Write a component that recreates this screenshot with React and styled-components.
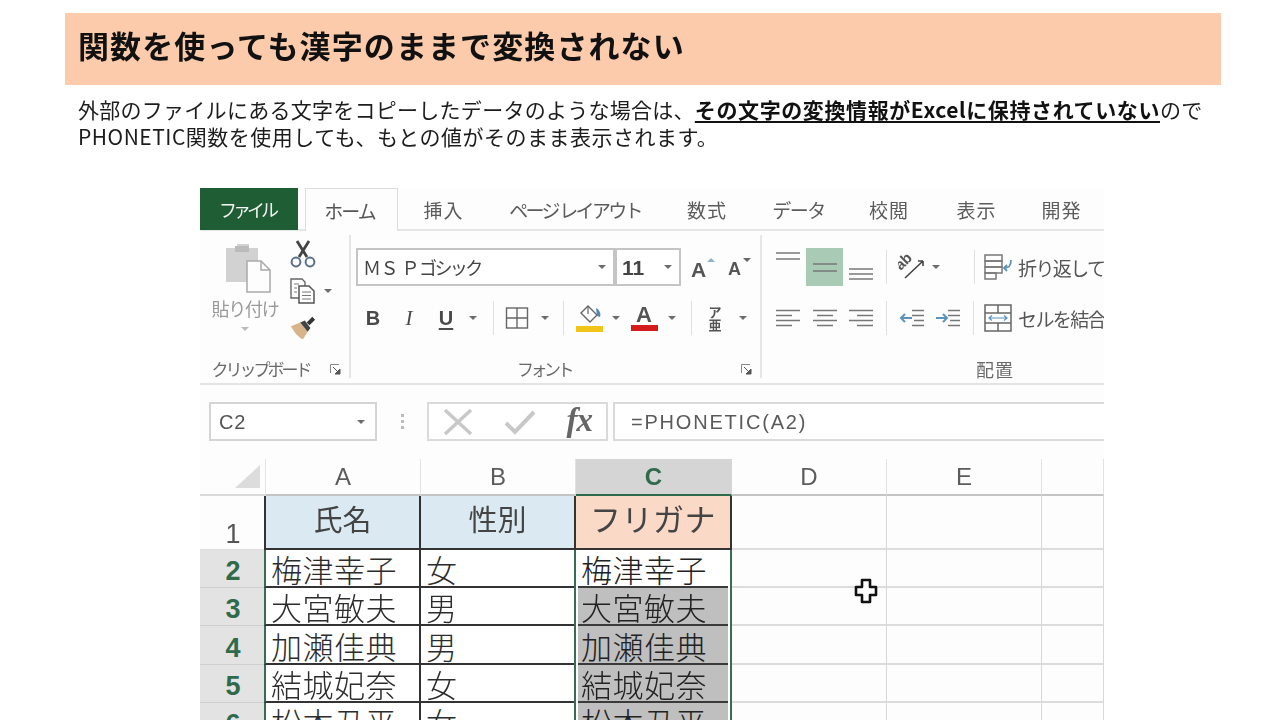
import React from "react";
import styled, { createGlobalStyle } from "styled-components";

const JP = `"Noto Sans CJK JP", "Noto Sans", sans-serif`;
const LAT = `"Liberation Sans", "Noto Sans CJK JP", sans-serif`;

const Global = createGlobalStyle`
  html, body { margin: 0; padding: 0; background: #fff; }
  body { width: 1280px; height: 720px; overflow: hidden; font-family: ${JP}; }
`;

const Page = styled.div`
  width: 1280px; height: 720px; overflow: hidden; box-sizing: border-box;
  padding: 13px 59px 0 65px; display: flex; flex-direction: column;
  filter: blur(0.35px);
`;
const Banner = styled.div`
  height: 72px; background: #fbcbab; display: flex; align-items: center; padding: 0 0 9px 13px; box-sizing: border-box;
`;
const Title = styled.h1`
  margin: 0; font: 700 31px/1 ${JP}; color: #111; letter-spacing: 1.1px; white-space: nowrap;
`;
const Lead = styled.div`
  margin: 11px 0 0 13px; font: 400 21px/27px "Noto Sans CJK JP", sans-serif; color: #1c1c1c; white-space: nowrap;
`;
const LeadLine = styled.div`
  letter-spacing: ${p => p.$ls}px;
`;
const Strong = styled.b`
  font-weight: 700; text-decoration: underline; text-underline-offset: 3px; color: #111; letter-spacing: 0.6px;
`;
const Excel = styled.div`
  margin: 38px 0 0 135px; width: 904px; flex: none; height: 532px; overflow: hidden; background: #fdfdfd; position: relative; color: #555;
`;

/* tabs */
const TabBar = styled.div`
  display: flex; height: 41px; border-bottom: 2px solid #e6e6e6; box-sizing: content-box;
`;
const FileTab = styled.div`
  width: 98px; height: 42px; background: #1f5d34; color: #f4f4f4; display: flex; align-items: center; justify-content: center;
  margin-right: 7px; font: 400 18px/1 ${JP}; letter-spacing: -4px; padding-right: 4px; box-sizing: border-box;
`;
const Tab = styled.div`
  width: ${p => p.$w}px; flex: none; display: flex; align-items: center; justify-content: center; white-space: nowrap;
  font: 400 19px/1 ${JP}; letter-spacing: ${p => p.$ls ?? 1}px; color: #5c5c5c; height: 42px; box-sizing: border-box;
  ${p => p.$active && `
    background: #fdfdfd; border: 1px solid #dcdcdc; border-bottom: 0; height: 43px; color: #555; padding-right: 4px;
  `}
`;

/* ribbon */
const Ribbon = styled.div`
  display: flex; height: 154px; box-sizing: border-box; padding-top: 4px; border-bottom: 2px solid #e4e4e4;
`;
const Group = styled.section`
  width: ${p => p.$w}px; flex: none; height: 143px; box-sizing: border-box; display: flex; flex-direction: column;
  padding: ${p => p.$pt ?? 13}px 0 0 ${p => p.$pl ?? 0}px; margin-right: ${p => p.$mr ?? 0}px;
  ${p => p.$sep && `border-right: 2px solid #e6e6e6;`}
`;
const ToolRow = styled.div`
  display: flex; align-items: center; height: ${p => p.$h ?? 38}px; flex: none; margin-bottom: ${p => p.$mb ?? 0}px;
`;
const Slot = styled.div`
  width: ${p => p.$w}px; flex: none; height: 100%; display: flex; align-items: center; justify-content: center; position: relative;
  ${p => p.$on && `background: #a9cbb5;`}
`;
const Sep = styled.i`
  display: block; width: 1px; height: 34px; background: #e0e0e0;
`;
const Caret = styled.i`
  display: block; width: 0; height: 0; border-left: 4px solid transparent; border-right: 4px solid transparent; border-top: 4px solid ${p => p.$c ?? "#6c6c6c"};
`;
const LabelRow = styled.div`
  margin-top: auto; display: flex; height: 22px; align-items: center; margin-bottom: -2px;
`;
const GroupLabel = styled.div`
  flex: 1; text-align: center; font: 400 ${p => p.$s ?? 17}px/22px ${JP}; color: #6a6a6a; letter-spacing: ${p => p.$ls ?? -3}px; white-space: nowrap;
`;
const Launcher = styled.div`
  width: ${p => p.$w}px; flex: none; display: flex; justify-content: center;
`;
const ClipBody = styled.div`
  display: flex; flex: none;
`;
const PasteCol = styled.div`
  width: 90px; flex: none; display: flex; flex-direction: column; align-items: center; padding-top: 8px; box-sizing: border-box;
`;
const PasteIcon = styled.div`
  height: 50px; margin-left: 6px;
`;
const PasteLabel = styled.div`
  font: 400 18px/22px ${JP}; letter-spacing: -1.2px; color: #9a9a9a; margin-top: 4px; margin-bottom: 8px; white-space: nowrap;
`;
const ClipTools = styled.div`
  display: flex; flex-direction: column;
`;
const ClipTool = styled.div`
  height: 37px; display: flex; align-items: center; gap: 8px;
`;
const ClipIcon = styled.div`
  width: 26px; display: flex; justify-content: center;
`;
const FontCombo = styled.div`
  width: ${p => p.$w}px; flex: none; height: 38px; box-sizing: border-box; border: 2px solid #c4c4c4; background: #fff; display: flex; align-items: center;
  justify-content: space-between; padding: 0 7px 0 5px; margin-left: ${p => p.$ml ?? 0}px;
  color: #444; white-space: nowrap;
`;
const FontName = styled.span`
  font: 400 18px/1 ${JP}; letter-spacing: -0.5px;
`;
const Kana = styled.span`
  letter-spacing: -2.6px;
`;
const SizeText = styled.span`
  font: 700 21px/1 ${LAT}; color: #444;
`;
const GrowA = styled.span`
  font: 700 ${p => p.$s}px/1 ${LAT}; color: #555; margin-right: 5px; margin-top: 4px;
`;
const Tip = styled.i`
  position: absolute; top: 10px; right: ${p => p.$r}px; width: 0; height: 0; border-left: 4px solid transparent; border-right: 4px solid transparent;
  ${p => p.$up ? `border-bottom: 4px solid #8fb5cf;` : `border-top: 4px solid #666;`}
`;
const Fmt = styled.span`
  font: ${p => p.$i ? "italic 400 21px/1 \"Liberation Serif\", serif" : "700 20px/1 \"Liberation Sans\", sans-serif"};
  color: #4a4a4a; ${p => p.$u && `text-decoration: underline; text-underline-offset: 3px;`}
`;
const ColorStack = styled.div`
  display: flex; flex-direction: column; align-items: center; width: 28px;
`;
const ColorA = styled.span`
  font: 700 22px/20px "Liberation Sans", sans-serif; color: #555;
`;
const ColorBar = styled.i`
  display: block; width: 27px; height: 6px; background: ${p => p.$c};
`;
const Phonetic = styled.div`
  display: flex; flex-direction: column; align-items: center; font: 700 13px/13px ${JP}; color: #555;
`;
const CmdText = styled.span`
  font: 400 19px/1 ${JP}; letter-spacing: -1.6px; color: #555; white-space: nowrap; margin-left: 3px;
`;

/* formula bar */
const FormulaBar = styled.div`
  display: flex; height: 39px; margin-top: 17px; padding-left: 9px;
`;
const NameBox = styled.div`
  width: 168px; flex: none; box-sizing: border-box; border: 2px solid #d4d4d4; background: #fff; display: flex; align-items: center; justify-content: space-between;
  padding: 0 10px 0 8px; font: 400 20px/1 ${LAT}; color: #555; letter-spacing: 0.8px;
`;
const Dots = styled.div`
  width: 50px; flex: none; display: flex; flex-direction: column; align-items: center; justify-content: center; gap: 3px;
`;
const Dot = styled.i`
  display: block; width: 3px; height: 3px; background: #bbb;
`;
const FxBox = styled.div`
  width: 181px; flex: none; box-sizing: border-box; border: 2px solid #dadada; background: #fff; display: flex; align-items: center; justify-content: space-between;
  padding: 0 14px 0 14px; margin-right: 5px;
`;
const Fx = styled.span`
  font: italic 700 33px/1 "Liberation Serif", serif; color: #666; margin-top: -2px; letter-spacing: -1px;
`;
const FormulaInput = styled.div`
  flex: 1; box-sizing: border-box; border: 2px solid #dadada; border-right: 0; background: #fff; display: flex; align-items: center;
  padding-left: 16px; font: 400 20px/1 ${LAT}; color: #5a5a5a; letter-spacing: 1.8px; white-space: nowrap;
`;

/* sheet */
const Sheet = styled.div`
  display: grid; margin-top: 18px;
  grid-template-columns: 66px 155px 155px 156px 155px 155px 62px;
  grid-template-rows: 37px 54px 38px 38px 39px 38px 38px;
  position: relative;
`;
const Corner = styled.div`
  display: flex; align-items: flex-end; justify-content: flex-end; padding: 0 5px 6px 0; border-bottom: 2px solid #dadada; border-right: 1px solid #e4e4e4;
`;
const ColHead = styled.div`
  display: flex; align-items: center; justify-content: center; box-sizing: border-box; font: ${p => p.$sel ? 700 : 400} 24px/1 ${LAT};
  color: ${p => p.$sel ? "#2f6a4c" : "#5c5c5c"}; background: ${p => p.$sel ? "#d5d5d5" : "transparent"};
  border-bottom: 2px solid ${p => p.$sel ? "#2f6a4c" : "#c4c4c4"}; border-right: 1px solid ${p => p.$sel ? "#d5d5d5" : "#e2e2e2"};
`;
const RowHead = styled.div`
  display: flex; justify-content: center; box-sizing: border-box; align-items: ${p => p.$first ? "flex-end" : "center"};
  padding: ${p => p.$first ? "0 0 1px 0" : "6px 0 0 0"};
  font: ${p => p.$first ? 400 : 700} 27px/1 ${LAT}; color: ${p => p.$first ? "#555" : "#2f6a4c"}; background: ${p => p.$first ? "transparent" : "#e3e3e3"};
  border-bottom: 1px solid ${p => p.$first ? "#ddd" : "#cfcfcf"};
`;
const HeadCell = styled.div`
  box-sizing: border-box; display: flex; align-items: center; justify-content: center; overflow: hidden; white-space: nowrap; color: #444;
  font: 400 ${p => p.$big ? 31 : 29}px/34px ${JP}; padding-bottom: 8px; background: ${p => p.$bg};
  letter-spacing: ${p => p.$big ? 0.5 : 0}px;
  border-right: 2px solid #333; border-bottom: 2px solid #333;
  ${p => p.$left && `border-left: 2px solid #333; margin-left: -2px;`}
`;
const Cell = styled.div`
  box-sizing: border-box; display: flex; align-items: flex-end; overflow: hidden; white-space: nowrap; color: #2c2c2c;
  font: 300 31px/34px ${JP}; letter-spacing: 0.5px; padding-left: 5px; background: #fff;
  border-right: 2px solid #333; border-bottom: 2px solid #333;
  ${p => p.$left && `border-left: 2px solid #3b6b55; margin-left: -2px;`}
`;
const SelCell = styled.div`
  box-sizing: border-box; display: flex; overflow: hidden; white-space: nowrap; background: #fff; padding: 0 2px;
  margin-left: -2px; border-left: 2px solid #3b6b55; border-right: 2px solid #3b6b55;
`;
const SelFill = styled.div`
  flex: 1; box-sizing: border-box; display: flex; align-items: flex-end; padding-left: 3px; color: #222;
  font: 300 31px/34px ${JP}; letter-spacing: 0.5px; overflow: hidden;
  background: ${p => p.$shade ? "#bfbfbf" : "#fff"}; border-bottom: 2px solid #3a3a3a;
`;
const Empty = styled.div`
  box-sizing: border-box; border-right: 1px solid #d8d8d8; border-bottom: 2px solid #dcdcdc;
`;
const Pointer = styled.svg`
  position: absolute; left: 654px; top: 119px; overflow: visible;
`;
const OrientText = styled.text`
  font: 700 15px "Liberation Sans", sans-serif; fill: #555;
`;

const Paste = () => (
  <svg width="48" height="50" viewBox="0 0 48 50">
    <path d="M2 5h11V1h12v4h9v34H2z" fill="#d2d2d2" />
    <rect x="11" y="3" width="14" height="6" fill="#bbb" />
    <path d="M23 18h14l9 9v22H23z" fill="#fdfdfd" stroke="#a9a9a9" strokeWidth="1.5" />
    <path d="M37 18v9h9" fill="none" stroke="#a9a9a9" strokeWidth="1.5" />
  </svg>
);
const Scissors = () => (
  <svg width="26" height="28" viewBox="0 0 26 28">
    <path d="M7 1l10 16M19 1L9 17" stroke="#444" strokeWidth="2.800" fill="none" />
    <circle cx="6" cy="22" r="4.400" fill="none" stroke="#56708a" strokeWidth="2" />
    <circle cx="20" cy="22" r="4.400" fill="none" stroke="#56708a" strokeWidth="2" />
  </svg>
);
const Copy = () => (
  <svg width="26" height="26" viewBox="0 0 26 26">
    <path d="M1 1h11l3 3v16H1z" fill="#fff" stroke="#666" strokeWidth="1.400" />
    <path d="M9 8h10l5 5v12H9z" fill="#fff" stroke="#555" strokeWidth="1.500" />
    <path d="M4 6h5M4 10h3M4 14h3M12 14h9M12 17.500h9M12 21h9" stroke="#777" strokeWidth="1.200" />
  </svg>
);
const Brush = () => (
  <svg width="28" height="26" viewBox="0 0 28 26">
    <path d="M1 11l10-4 8 10-5 8c-5-2-10-8-13-14z" fill="#d8b48a" />
    <path d="M11 7l5-2 6 8-3 4z" fill="#444" />
    <path d="M18 7l6-6 3 3-6 6z" fill="#333" />
  </svg>
);
const Launch = () => (
  <svg width="11" height="11" viewBox="0 0 11 11">
    <path d="M.5 9V.5H9" fill="none" stroke="#888" />
    <path d="M3 3l7 7M10 5v5H5z" stroke="#555" fill="#555" strokeWidth="1" />
  </svg>
);
const Borders = () => (
  <svg width="24" height="24" viewBox="0 0 24 24" fill="none" stroke="#666" strokeWidth="1.400">
    <rect x="1.500" y="2" width="21" height="20" /><path d="M12 2v20M1.500 12h21" />
  </svg>
);
const Bucket = () => (
  <svg width="28" height="22" viewBox="0 0 28 22">
    <path d="M13 2l9 9-7 7-9-9z" fill="#fff" stroke="#666" strokeWidth="1.400" />
    <path d="M13 2v8" stroke="#666" strokeWidth="1.200" />
    <path d="M21 4c4 2 5 6 4 9l-3-1z" fill="#4f87b8" />
  </svg>
);
const lineSet = (ys, w = 24) => ys.map(y => <path key={y} d={`M0 ${y}h${w}`} stroke="#777" strokeWidth="1.500" />);
const VAlign = ({ ys, dy = 0 }) => (
  <svg width="24" height="26" viewBox="0 0 24 26" style={{ marginTop: dy }}>{lineSet(ys)}</svg>
);
const HAlign = ({ mode }) => {
  const rows = [24, 16, 24, 16];
  return (
    <svg width="24" height="20" viewBox="0 0 24 20">
      {rows.map((w, i) => {
        const x = mode === "l" ? 0 : mode === "c" ? (24 - w) / 2 : 24 - w;
        return <path key={i} d={`M${x} ${2.500 + i * 5}h${w}`} stroke="#777" strokeWidth="1.500" />;
      })}
    </svg>
  );
};
const Orient = () => (
  <svg width="28" height="26" viewBox="0 0 28 26">
    <OrientText transform="rotate(-45 2 15)" x="1" y="17">ab</OrientText>
    <path d="M7 24L25 7M25 7h-5M25 7v5" fill="none" stroke="#444" strokeWidth="1.600" />
  </svg>
);
const Indent = ({ flip }) => (
  <svg width="26" height="20" viewBox="0 0 26 20">
    <path d={flip ? "M1 10h11M8 6l4 4-4 4" : "M2 10h11M6 6l-4 4 4 4"} stroke="#5b93bd" strokeWidth="2" fill="none" />
    <path d="M13 2.500h12M13 7.500h12M15 12.500h10M13 17.500h12" stroke="#777" strokeWidth="1.500" />
  </svg>
);
const Wrap = () => (
  <svg width="28" height="26" viewBox="0 0 28 26" fill="none" stroke="#777" strokeWidth="1.500">
    <rect x="1" y="1" width="17" height="6" /><rect x="1" y="7" width="17" height="6" /><rect x="1" y="13" width="17" height="6" /><rect x="1" y="19" width="11" height="6" />
    <path d="M27 6c0 6-2 8-7 8M23 11l-3 3 3 3" stroke="#5b93bd" strokeWidth="1.800" />
  </svg>
);
const Merge = () => (
  <svg width="28" height="28" viewBox="0 0 28 28" fill="none" stroke="#666" strokeWidth="1.500">
    <rect x="1" y="1" width="26" height="26" /><path d="M1 9h26M1 19h26M14 1v8M14 19v8" />
    <path d="M5 14h18M8 11.500L5 14l3 2.500M20 11.500l3 2.500-3 2.500" stroke="#5b93bd" strokeWidth="1.200" />
  </svg>
);

const C = ({ c }) => <Caret $c={c} />;

const rows = [
  ["2", "梅津幸子", "女", "梅津幸子", false],
  ["3", "大宮敏夫", "男", "大宮敏夫", true],
  ["4", "加瀬佳典", "男", "加瀬佳典", true],
  ["5", "結城妃奈", "女", "結城妃奈", true],
  ["6", "松本丑平", "女", "松本丑平", true],
];

export default function App() {
  return (
    <Page>
      <Global />
      <Banner><Title>関数を使っても漢字のままで変換されない</Title></Banner>
      <Lead>
        <LeadLine $ls={0.27}>外部のファイルにある文字をコピーしたデータのような場合は、<Strong>その文字の変換情報がExcelに保持されていない</Strong>ので</LeadLine>
        <LeadLine $ls={0.5}>PHONETIC関数を使用しても、もとの値がそのまま表示されます。</LeadLine>
      </Lead>
      <Excel>
        <TabBar>
          <FileTab>ファイル</FileTab>
          <Tab $w={93} $active $ls={-2}>ホーム</Tab>
          <Tab $w={91}>挿入</Tab>
          <Tab $w={172} $ls={-2.7}>ページ レイアウト</Tab>
          <Tab $w={92}>数式</Tab>
          <Tab $w={91} $ls={-1.500}>データ</Tab>
          <Tab $w={90}>校閲</Tab>
          <Tab $w={85}>表示</Tab>
          <Tab $w={85}>開発</Tab>
        </TabBar>
        <Ribbon>
          <Group $w={151} $pt={0} $sep>
            <ClipBody>
              <PasteCol>
                <PasteIcon><Paste /></PasteIcon>
                <PasteLabel>貼り付け</PasteLabel>
                <C c="#bbb" />
              </PasteCol>
              <ClipTools>
                <ClipTool><ClipIcon><Scissors /></ClipIcon></ClipTool>
                <ClipTool><ClipIcon><Copy /></ClipIcon><C /></ClipTool>
                <ClipTool><ClipIcon><Brush /></ClipIcon></ClipTool>
              </ClipTools>
            </ClipBody>
            <LabelRow><GroupLabel>クリップボード</GroupLabel><Launcher $w={28}><Launch /></Launcher></LabelRow>
          </Group>
          <Group $w={411} $pl={5} $sep>
            <ToolRow $mb={14}>
              <FontCombo $w={259}>
                <FontName>ＭＳ Ｐ<Kana>ゴシック</Kana></FontName><C />
              </FontCombo>
              <FontCombo $w={66}><SizeText>11</SizeText><C /></FontCombo>
              <Slot $w={40}><GrowA $s={21}>A</GrowA><Tip $up $r={6} /></Slot>
              <Slot $w={32}><GrowA $s={18}>A</GrowA><Tip $r={2} /></Slot>
            </ToolRow>
            <ToolRow $h={36}>
              <Slot $w={34}><Fmt>B</Fmt></Slot>
              <Slot $w={38}><Fmt $i>I</Fmt></Slot>
              <Slot $w={36}><Fmt $u>U</Fmt></Slot>
              <Slot $w={18}><C /></Slot>
              <Slot $w={22}><Sep /></Slot>
              <Slot $w={26}><Borders /></Slot>
              <Slot $w={30}><C /></Slot>
              <Slot $w={6}><Sep /></Slot>
              <Slot $w={46}><ColorStack><Bucket /><ColorBar $c="#f0c419" /></ColorStack></Slot>
              <Slot $w={8}><C /></Slot>
              <Slot $w={48}><ColorStack><ColorA>A</ColorA><ColorBar $c="#d41c1c" /></ColorStack></Slot>
              <Slot $w={8}><C /></Slot>
              <Slot $w={30}><Sep /></Slot>
              <Slot $w={18}><Phonetic><span>ア</span><span>亜</span></Phonetic></Slot>
              <Slot $w={38}><C /></Slot>
            </ToolRow>
            <LabelRow><GroupLabel $ls={-3.500}>フォント</GroupLabel><Launcher $w={28}><Launch /></Launcher></LabelRow>
          </Group>
          <Group $w={458} $pl={8}>
            <ToolRow $mb={14}>
              <Slot $w={36}><VAlign ys={[3, 9]} dy={-8} /></Slot>
              <Slot $w={37} $on><VAlign ys={[10, 17]} /></Slot>
              <Slot $w={36}><VAlign ys={[12, 17, 22]} dy={6} /></Slot>
              <Slot $w={14}><Sep /></Slot>
              <Slot $w={38}><Orient /></Slot>
              <Slot $w={10}><C /></Slot>
              <Slot $w={26} />
              <Slot $w={14}><Sep /></Slot>
              <Slot $w={34}><Wrap /></Slot>
              <CmdText>折り返して全</CmdText>
            </ToolRow>
            <ToolRow $h={36}>
              <Slot $w={36}><HAlign mode="l" /></Slot>
              <Slot $w={37}><HAlign mode="c" /></Slot>
              <Slot $w={36}><HAlign mode="r" /></Slot>
              <Slot $w={14}><Sep /></Slot>
              <Slot $w={37}><Indent /></Slot>
              <Slot $w={36}><Indent flip /></Slot>
              <Slot $w={15}><Sep /></Slot>
              <Slot $w={34}><Merge /></Slot>
              <CmdText>セルを結合</CmdText>
            </ToolRow>
            <LabelRow><GroupLabel $ls={1} $s={18}>配置</GroupLabel></LabelRow>
          </Group>
        </Ribbon>
        <FormulaBar>
          <NameBox>C2<C /></NameBox>
          <Dots><Dot /><Dot /><Dot /></Dots>
          <FxBox>
            <svg width="30" height="28" viewBox="0 0 30 28"><path d="M2 2l26 24M28 2L2 26" stroke="#c8c8c8" strokeWidth="3.500" /></svg>
            <svg width="32" height="26" viewBox="0 0 32 26"><path d="M2 14l9 9L30 3" fill="none" stroke="#c8c8c8" strokeWidth="4" /></svg>
            <Fx>fx</Fx>
          </FxBox>
          <FormulaInput>=PHONETIC(A2)</FormulaInput>
        </FormulaBar>
        <Sheet>
          <Corner><svg width="25" height="23" viewBox="0 0 25 23"><path d="M25 0v23H0z" fill="#dcdcdc" /></svg></Corner>
          <ColHead>A</ColHead><ColHead>B</ColHead><ColHead $sel>C</ColHead><ColHead>D</ColHead><ColHead>E</ColHead><ColHead />

          <RowHead $first>1</RowHead>
          <HeadCell $bg="#dbeaf2" $left>氏名</HeadCell>
          <HeadCell $bg="#dbeaf2">性別</HeadCell>
          <HeadCell $bg="#fad9c7" $big>フリガナ</HeadCell>
          <Empty /><Empty /><Empty />

          {rows.map(([n, name, sex, kana, shade]) => (
            <React.Fragment key={n}>
              <RowHead>{n}</RowHead>
              <Cell $left>{name}</Cell>
              <Cell>{sex}</Cell>
              <SelCell><SelFill $shade={shade}>{kana}</SelFill></SelCell>
              <Empty /><Empty /><Empty />
            </React.Fragment>
          ))}
          <Pointer width="24" height="26" viewBox="0 0 24 26">
            <path d="M8 2h8v7h6v8h-6v7H8v-7H2V9h6z" fill="#fff" stroke="#111" strokeWidth="2.600" strokeLinejoin="round" />
          </Pointer>
        </Sheet>
      </Excel>
    </Page>
  );
}
